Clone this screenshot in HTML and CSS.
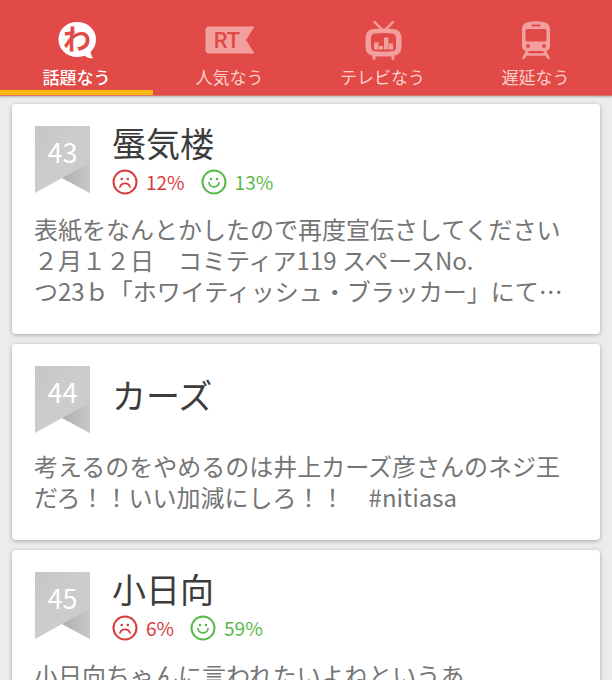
FILE: index.html
```
<!DOCTYPE html>
<html lang="ja">

<head>
    <meta charset="UTF-8">
    <meta name="viewport" content="width=device-width, initial-scale=1.0">
    <link rel="stylesheet" href="styles.css">
    <title>話題なう</title>
</head>

<body>
    <!-- Shared icons -->
    <svg class="sprite" aria-hidden="true">
        <symbol id="ribbon" viewBox="0 0 55 67">
            <path d="M0 0H55V67L27 52L0 67Z" fill="url(#sheet)"/>
            <path d="M55 37V67L27 52Z" fill="url(#fold)"/>
        </symbol>
        <symbol id="sad" viewBox="0 0 26 26">
            <circle cx="13" cy="13" r="11.5" fill="none" stroke="currentColor" stroke-width="2"/>
            <circle cx="9.8" cy="10" r="1.3" fill="currentColor"/>
            <circle cx="15.8" cy="10" r="1.3" fill="currentColor"/>
            <path d="M8 18C9.5 13.2 16.5 13.2 18 18" fill="none" stroke="currentColor" stroke-width="1.7" stroke-linecap="round"/>
        </symbol>
        <symbol id="smile" viewBox="0 0 26 26">
            <circle cx="13" cy="13" r="11.5" fill="none" stroke="currentColor" stroke-width="2"/>
            <circle cx="10" cy="10" r="1.3" fill="currentColor"/>
            <circle cx="16" cy="10" r="1.3" fill="currentColor"/>
            <path d="M8 13.5C8.5 19.2 17.5 19.2 18 13.5" fill="none" stroke="currentColor" stroke-width="1.7" stroke-linecap="round"/>
        </symbol>
        <linearGradient id="sheet" x1="0" y1="0" x2="1" y2="1">
            <stop offset="0" stop-color="#c5c5c5"/>
            <stop offset="0.4" stop-color="#cccccc"/>
        </linearGradient>
        <linearGradient id="fold" x1="0" y1="0.5" x2="1" y2="0.5">
            <stop offset="0" stop-color="#aeaeac"/>
            <stop offset="1" stop-color="#c9c9c7"/>
        </linearGradient>
    </svg>

    <header>
        <nav class="tabs">
            <a class="tab active" href="#topics">
                <svg class="tab-icon" viewBox="0 0 52 40">
                    <path d="M26 2C36.500 2 45 9.500 45 19C45 24.500 43 29 39.500 32C40 34.500 41 36.500 42 38.300C38.500 38.300 35.500 37.300 33.500 35.700C31 36.600 28.500 37 26 37C15.500 37 7.500 29 7.500 19.500C7.500 9.500 15.500 2 26 2Z" fill="#fff"/>
                    <text class="bubble-text" x="26" y="30" text-anchor="middle">わ</text>
                </svg>
                <span>話題なう</span>
            </a>
            <a class="tab" href="#popular">
                <svg class="tab-icon" viewBox="0 0 52 40">
                    <path d="M5 6.500H50.500L42 20L50.500 33.500H5Q1.500 33.500 1.500 30V10Q1.500 6.500 5 6.500Z" fill="currentColor"/>
                    <text class="rt-text" x="23" y="28" text-anchor="middle">RT</text>
                </svg>
                <span>人気なう</span>
            </a>
            <a class="tab" href="#tv">
                <svg class="tab-icon" viewBox="0 0 52 40">
                    <path d="M17.500 2L25 9.500M36 2L28.500 9.500" fill="none" stroke="currentColor" stroke-width="2.400" stroke-linecap="round"/>
                    <path fill-rule="evenodd" d="M17 9Q26.500 8 36 9Q44.500 9.500 44.500 18V27Q44.500 35 36 36Q26.500 37 17 36Q8.500 35 8.500 27V18Q8.500 9.500 17 9ZM18 13.500Q14 13.800 14 18V26.500Q14 31 18 31.300Q26.500 32.200 35 31.300Q39 31 39 26.500V18Q39 13.800 35 13.500Q26.500 12.600 18 13.500Z" fill="currentColor"/>
                    <path d="M17 22.500H21.500V29.500H17ZM22 26H26V29.500H22ZM27 17.500H31.500V29.500H27ZM32 23.500H36V29.500H32Z" fill="currentColor"/>
                    <path d="M17 35V38.500M36 35V38.500" stroke="currentColor" stroke-width="3" stroke-linecap="round"/>
                </svg>
                <span>テレビなう</span>
            </a>
            <a class="tab" href="#delay">
                <svg class="tab-icon" viewBox="0 0 52 40">
                    <path fill-rule="evenodd" d="M19 2Q26 0.500 33 2Q40 3 40 9V26Q40 31 35 31H17Q12 31 12 26V9Q12 3 19 2ZM21.500 4.500V6.500H30.500V4.500ZM17.500 9Q15.500 9 15.500 11V19.500Q15.500 21.500 17.500 21.500H34.500Q36.500 21.500 36.500 19.500V11Q36.500 9 34.500 9ZM18 24A2 2 0 1 0 18 28A2 2 0 1 0 18 24ZM34 24A2 2 0 1 0 34 28A2 2 0 1 0 34 24Z" fill="currentColor"/>
                    <path d="M17.500 31L13.500 38M34.500 31L38.500 38M17 34.500H35" fill="none" stroke="currentColor" stroke-width="2.600" stroke-linecap="round"/>
                </svg>
                <span>遅延なう</span>
            </a>
        </nav>
    </header>

    <main class="feed" id="topics">
        <article class="card">
            <div class="card-head">
                <div class="rank">
                    <svg class="ribbon"><use href="#ribbon"/></svg>
                    <span class="rank-number">43</span>
                </div>
                <div class="heading">
                    <h2>蜃気楼</h2>
                    <div class="mood">
                        <span class="mood-item bad"><svg><use href="#sad"/></svg>12%</span>
                        <span class="mood-item good"><svg><use href="#smile"/></svg>13%</span>
                    </div>
                </div>
            </div>
            <p>表紙をなんとかしたので再度宣伝さしてください<br>２月１２日　コミティア119 スペースNo.<br>つ23ｂ「ホワイティッシュ・ブラッカー」にて…</p>
        </article>

        <article class="card">
            <div class="card-head">
                <div class="rank">
                    <svg class="ribbon"><use href="#ribbon"/></svg>
                    <span class="rank-number">44</span>
                </div>
                <div class="heading">
                    <h2>カーズ</h2>
                </div>
            </div>
            <p>考えるのをやめるのは井上カーズ彦さんのネジ王<br>だろ！！いい加減にしろ！！　#nitiasa</p>
        </article>

        <article class="card">
            <div class="card-head">
                <div class="rank">
                    <svg class="ribbon"><use href="#ribbon"/></svg>
                    <span class="rank-number">45</span>
                </div>
                <div class="heading">
                    <h2>小日向</h2>
                    <div class="mood">
                        <span class="mood-item bad"><svg><use href="#sad"/></svg>6%</span>
                        <span class="mood-item good"><svg><use href="#smile"/></svg>59%</span>
                    </div>
                </div>
            </div>
            <p>小日向ちゃんに言われたいよねというあ</p>
        </article>
    </main>
</body>

</html>
```

FILE: styles.css
```
* {
    box-sizing: border-box;
}

body {
    margin: 0;
    height: 100vh;
    display: flex;
    flex-direction: column;
    background: #ececec;
    color: #757575;
    font-family: "Noto Sans CJK JP", sans-serif;
}

.sprite {
    position: absolute;
    width: 0;
    height: 0;
}

/* Header tabs */
header {
    flex: none;
    background: #e24a48;
    border-bottom: 1px solid #d9716c;
    box-shadow: 0 1px 2px rgba(0, 0, 0, 0.25);
    z-index: 1;
}

.tabs {
    display: flex;
}

.tab {
    flex: 1;
    display: flex;
    flex-direction: column;
    align-items: center;
    padding-top: 20px;
    border-bottom: 5px solid transparent;
    color: #f29f9d;
    font-size: 17px;
    line-height: 24px;
    text-decoration: none;
}

.tab span {
    margin: 5px 0 1px;
    color: #fbcfca;
}

.tab.active {
    border-bottom-color: #f9b90c;
}

.tab.active span {
    color: #fff;
    font-weight: 500;
}

.tab-icon {
    width: 52px;
    height: 40px;
    overflow: visible;
}

.bubble-text {
    font-size: 28px;
    font-weight: 700;
    fill: #e24a48;
}

.rt-text {
    font-family: Roboto, sans-serif;
    font-size: 22px;
    font-weight: 500;
    fill: #e24a48;
}

/* Topic cards */
.feed {
    flex: 1;
    min-height: 0;
    overflow-y: auto;
    scrollbar-width: none;
    padding: 8px 12px;
}

.card {
    margin-bottom: 10px;
    padding: 22px 22px 28px;
    background: #fff;
    border-radius: 4px;
    box-shadow: 0 1px 4px rgba(0, 0, 0, 0.3);
}

.card-head {
    display: flex;
    gap: 22px;
    margin-bottom: 17px;
    padding-left: 1px;
}

.rank {
    display: grid;
    width: 55px;
    height: 67px;
}

.ribbon,
.rank-number {
    grid-area: 1 / 1;
}

.ribbon {
    width: 55px;
    height: 67px;
}

.rank-number {
    padding-top: 8px;
    color: #fff;
    font-size: 27px;
    line-height: 36px;
    text-align: center;
}

.heading {
    align-self: center;
    padding-bottom: 1px;
}

h2 {
    margin: 0 0 9px;
    color: #3c3c3c;
    font-size: 34px;
    font-weight: 400;
    line-height: 34px;
}

.mood {
    display: flex;
    gap: 16px;
}

.mood-item {
    display: flex;
    align-items: center;
    gap: 8px;
    font-size: 19px;
    line-height: 26px;
}

.mood-item svg {
    width: 26px;
    height: 26px;
}

.bad {
    color: #d63b3b;
}

.good {
    color: #55b947;
}

.card p {
    margin: 0;
    font-size: 24px;
    line-height: 31px;
    white-space: nowrap;
}
```
